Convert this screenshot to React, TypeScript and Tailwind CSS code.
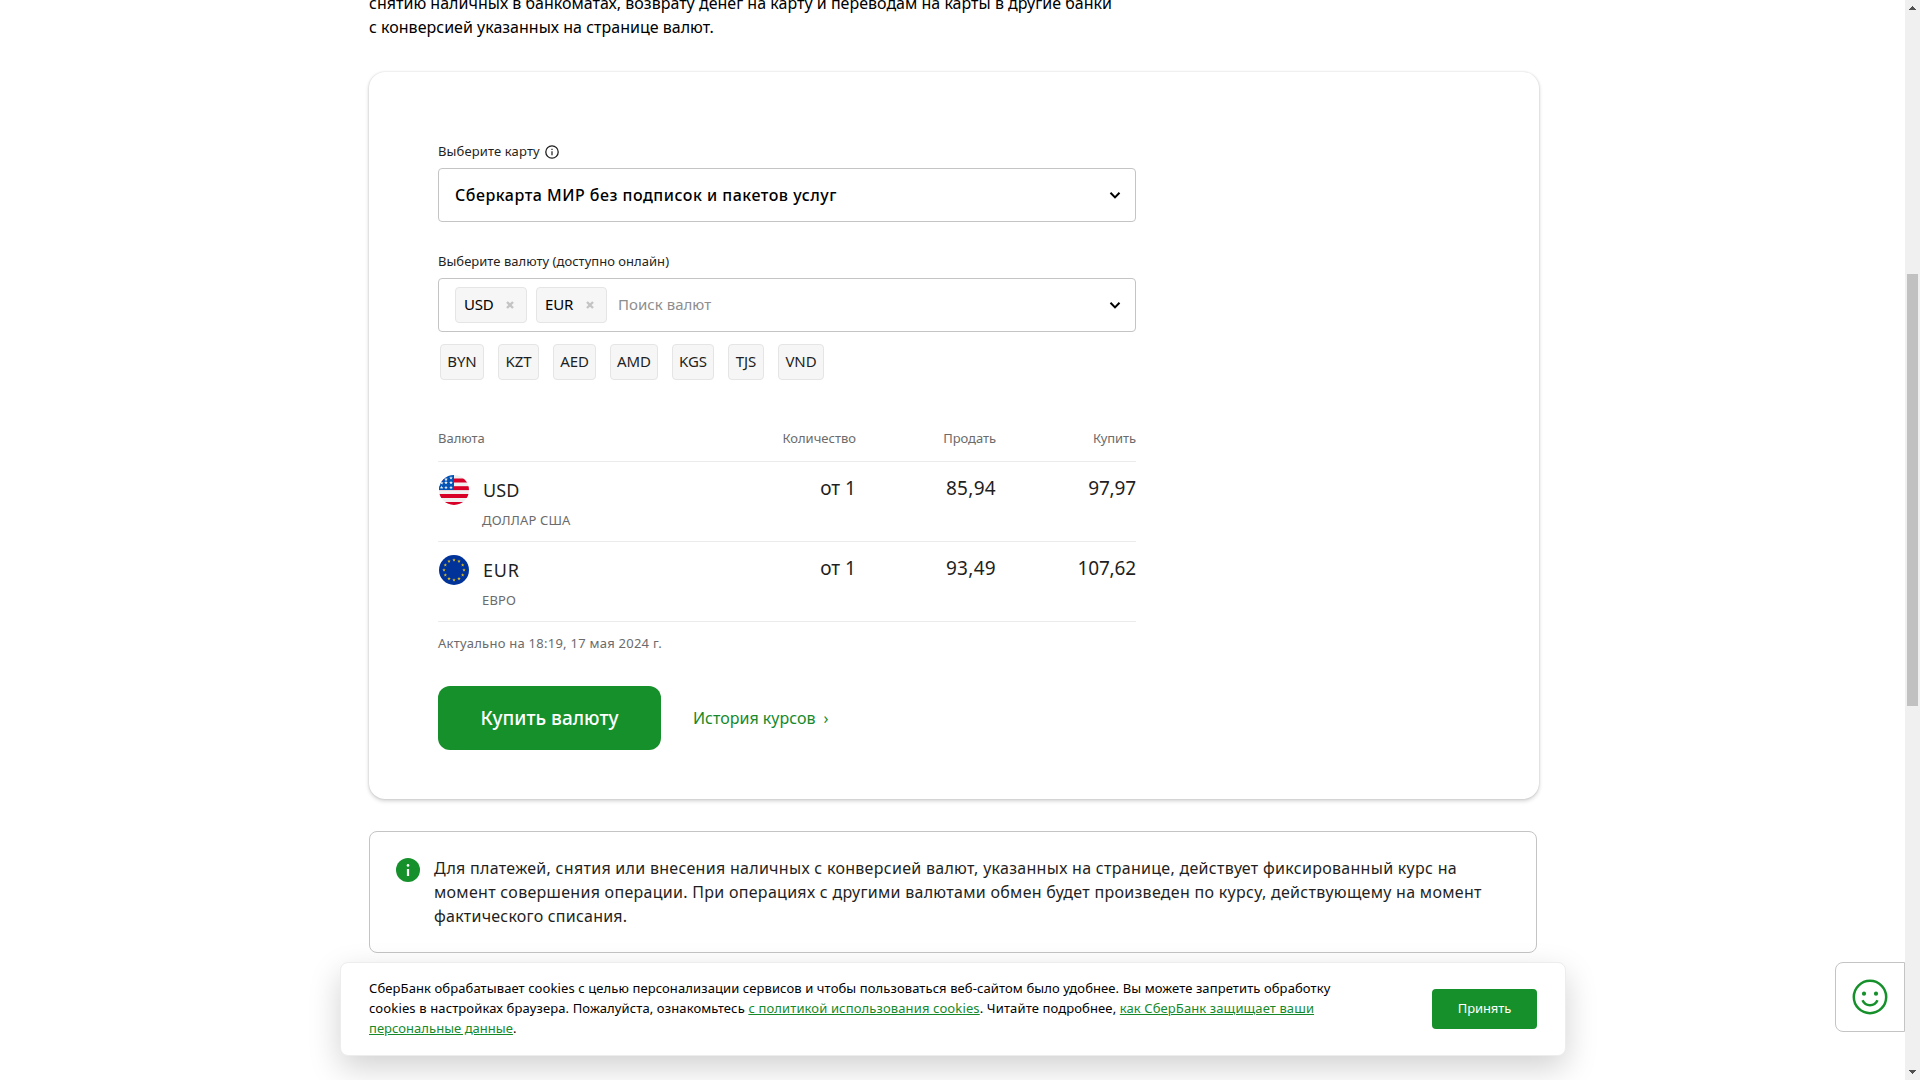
import React from "react";

const Chevron = () => (
  <svg width="12" height="12" viewBox="0 0 12 12" fill="none" stroke="#000" strokeWidth="2" className="shrink-0">
    <path d="M1.5 3.7 6 8.4l4.5-4.7" />
  </svg>
);

const UsFlag = () => (
  <svg width="30" height="30" viewBox="0 0 30 30" className="shrink-0">
    <defs>
      <clipPath id="us">
        <circle cx="15" cy="15" r="15" />
      </clipPath>
    </defs>
    <g clipPath="url(#us)">
      <rect width="30" height="30" fill="#f0f0f0" />
      <g fill="#d80027">
        <rect y="3.5" width="30" height="4" />
        <rect y="11.2" width="30" height="3.9" />
        <rect y="19" width="30" height="4" />
        <rect y="27" width="30" height="3" />
      </g>
      <rect width="15" height="15" fill="#0052b4" />
      <g fill="#f0f0f0">
        {[
          [12, 3], [7, 4.4], [12, 7.7], [7, 7.7], [12, 12.5], [7, 12.5], [2.6, 12.5], [2.8, 8],
        ].map(([x, y]) => (
          <path key={`${x}-${y}`} transform={`translate(${x} ${y})`} d="M0-1.9.5-.6 1.9-.6.7.3 1.2 1.6 0 .8-1.2 1.6-.7.3-1.9-.6-.5-.6Z" />
        ))}
      </g>
    </g>
  </svg>
);

const EuFlag = () => (
  <svg width="30" height="30" viewBox="0 0 30 30" className="shrink-0">
    <circle cx="15" cy="15" r="15" fill="#003399" />
    <g fill="#e0bd1c">
      {[
        [15, 5], [20, 6.3], [23.7, 10], [25, 15], [23.7, 20], [20, 23.7],
        [15, 25], [10, 23.7], [6.3, 20], [5, 15], [6.3, 10], [10, 6.3],
      ].map(([x, y]) => (
        <path key={`${x}-${y}`} transform={`translate(${x} ${y})`} d="M0-1.7.5-.6 1.7-.6.7.2 1.1 1.5 0 .8-1.1 1.5-.7.2-1.7-.6-.5-.6Z" />
      ))}
    </g>
  </svg>
);

const chips = [
  { code: "BYN", cls: "w-[44px] mr-[14px]" },
  { code: "KZT", cls: "w-[41px] mr-[14px]" },
  { code: "AED", cls: "w-[43px] mr-[14px]" },
  { code: "AMD", cls: "w-[48px] mr-[14px]" },
  { code: "KGS", cls: "w-[42px] mr-[14px]" },
  { code: "TJS", cls: "w-[36px] mr-[14px]" },
  { code: "VND", cls: "w-[46px]" },
];

const rates = [
  { code: "USD", codeCls: "tracking-[0.1px]", name: "ДОЛЛАР США", sell: "85,94", buy: "97,97", flag: <UsFlag /> },
  { code: "EUR", codeCls: "tracking-[0.8px]", name: "ЕВРО", sell: "93,49", buy: "107,62", flag: <EuFlag /> },
];

const cols = "grid grid-cols-[1fr_140px_140px_140px]";

function Selected({ code, cls }: { code: string; cls: string }) {
  return (
    <div className={`flex h-[36px] items-center rounded-[4px] border border-[#e5e5e5] bg-[#f6f6f6] pl-[8px] text-[15px] tracking-[-0.2px] text-black ${cls}`}>
      <span className="pb-px">{code}</span>
      <svg width="8" height="8" viewBox="0 0 8 8" stroke="#c4c4c4" strokeWidth="2.4" className="ml-auto mr-[12px]">
        <path d="M1 1l6 6M7 1 1 7" />
      </svg>
    </div>
  );
}

export default function App() {
  return (
    <div className="relative flex h-[1080px] w-[1920px] overflow-hidden bg-white font-['Noto_Sans',sans-serif] text-[#1f1f22]">
      <main className="flex-1 pl-[369px]">
        <p className="-mt-[9px] text-[16px] leading-[24px] tracking-[0.014px] text-black">
          снятию наличных в банкоматах, возврату денег на карту и переводам на карты в другие банки
          <br />
          с конверсией указанных на странице валют.
        </p>

        <section className="mt-[33px] h-[727px] w-[1170px] rounded-[16px] bg-white pl-[69px] pt-[69px] shadow-[0_0_2px_rgba(0,0,0,0.16),0_2px_4px_rgba(0,0,0,0.18)]">
          <div className="w-[698px]">
            <div className="flex h-[22px] items-center text-[13px] tracking-[0.13px]">
              Выберите карту
              <svg width="14" height="14" viewBox="0 0 14 14" fill="none" stroke="#1f1f22" strokeWidth="1.3" className="ml-[5px]">
                <circle cx="7" cy="7" r="6.2" />
                <path d="M7 6.2V10.2M7 3.7V5" strokeWidth="1.2" />
              </svg>
            </div>
            <div className="mt-[5px] flex h-[54px] items-center justify-between rounded-[4px] border border-[#c4c4c4] pl-[16px] pr-[14px] text-[16px] font-medium tracking-[0.5px] text-black">
              Сберкарта МИР без подписок и пакетов услуг
              <Chevron />
            </div>

            <div className="mt-[30px] flex h-[20px] items-center text-[13px] tracking-[0.025px]">Выберите валюту (доступно онлайн)</div>
            <div className="mt-[6px] flex h-[54px] items-center rounded-[4px] border border-[#c4c4c4] pl-[16px] pr-[14px]">
              <Selected code="USD" cls="w-[72px]" />
              <Selected code="EUR" cls="ml-[9px] w-[71px]" />
              <span className="ml-[11px] flex-1 pb-px text-[15px] tracking-[0.03px] text-[#8e8e8e]">Поиск валют</span>
              <Chevron />
            </div>
            <div className="mt-[12px] flex pl-[2px]">
              {chips.map((c) => (
                <div key={c.code} className={`flex h-[36px] items-center justify-center rounded-[4px] border border-[#e5e5e5] bg-[#f6f6f6] pb-[2px] text-[15px] tracking-[-0.1px] ${c.cls}`}>
                  {c.code}
                </div>
              ))}
            </div>

            <div className={`${cols} mt-[42px] h-[40px] border-b border-[#ebebeb] pt-[6px] text-[13px] leading-[20px] text-[#6b6b6b]`}>
              <span>Валюта</span>
              <span className="text-right">Количество</span>
              <span className="text-right tracking-[-0.05px]">Продать</span>
              <span className="text-right tracking-[-0.1px]">Купить</span>
            </div>
            {rates.map((r) => (
              <div key={r.code} className={`${cols} h-[80px] border-b border-[#ebebeb] text-[19px] leading-[24px]`}>
                <div className="pt-[13px]">
                  <div className="flex items-center pl-px">
                    {r.flag}
                    <span className={`ml-[14px] text-[18px] ${r.codeCls}`}>{r.code}</span>
                  </div>
                  <div className="pl-[44px] pt-[5px] text-[13px] leading-[20px] tracking-[0.15px] text-[#6b6b6b]">{r.name}</div>
                </div>
                <span className="pt-[14px] text-right">от 1</span>
                <span className="pt-[14px] text-right tracking-[0.3px]">{r.sell}</span>
                <span className="pt-[14px] text-right tracking-[-0.15px]">{r.buy}</span>
              </div>
            ))}
            <div className="mt-[11px] text-[13px] leading-[20px] tracking-[0.25px] text-[#6b6b6b]">Актуально на 18:19, 17 мая 2024 г.</div>

            <div className="mt-[33px] flex items-center">
              <button className="h-[64px] w-[223px] rounded-[12px] bg-[#16902b] text-[19px] font-medium text-white">Купить валюту</button>
              <a className="ml-[32px] text-[16px] text-[#168a2b]">История курсов</a>
              <span className="ml-[8px] text-[16px] text-[#168a2b]">›</span>
            </div>
          </div>
        </section>

        <section className="mt-[32px] flex h-[122px] w-[1168px] rounded-[8px] border border-[#c4c4c4] pl-[26px] pt-[24px]">
          <svg width="24" height="24" viewBox="0 0 24 24" className="mt-[2px] shrink-0">
            <circle cx="12" cy="12" r="12" fill="#16902b" />
            <rect x="10.9" y="11" width="2.2" height="7" fill="#fff" />
            <circle cx="12" cy="7.4" r="1.3" fill="#fff" />
          </svg>
          <p className="ml-[14px] whitespace-nowrap text-[16px] leading-[24px] tracking-[0.29px]">
            Для платежей, снятия или внесения наличных с конверсией валют, указанных на странице, действует фиксированный курс на
            <br />
            момент совершения операции. При операциях с другими валютами обмен будет произведен по курсу, действующему на момент
            <br />
            <span className="tracking-[0.22px]">фактического списания.</span>
          </p>
        </section>
      </main>

      <div className="flex w-[15px] flex-col items-center bg-[#f0f0f0]">
        <svg width="15" height="15" viewBox="0 0 15 15" fill="#505050" shapeRendering="crispEdges">
          <path d="M7.5 5.5 11.5 10h-8z" />
        </svg>
        <div className="mt-[259px] h-[432px] w-[11px] bg-[#c1c1c1]" />
        <svg width="15" height="15" viewBox="0 0 15 15" fill="#505050" shapeRendering="crispEdges" className="mt-auto">
          <path d="M3.5 5h8l-4 4.5z" />
        </svg>
      </div>

      <div className="absolute left-[340px] top-[962px] flex h-[94px] w-[1226px] items-center rounded-[8px] border border-[#ededed] bg-white pl-[28px] shadow-[0_12px_32px_rgba(0,0,0,0.18)]">
        <p className="flex-1 whitespace-nowrap pb-[2px] text-[13px] leading-[20px] tracking-[0.1px] text-black">
          СберБанк обрабатывает cookies с целью персонализации сервисов и чтобы пользоваться веб-сайтом было удобнее. Вы можете запретить обработку
          <br />
          <span className="tracking-[0.125px]">
            cookies в настройках браузера. Пожалуйста, ознакомьтесь <a className="text-[#168a2b] underline">с политикой использования cookies</a>. Читайте подробнее,{" "}
          </span>
          <a className="text-[#168a2b] underline">
            как СберБанк защищает ваши
            <br />
            <span className="tracking-[0.03px]">персональные данные</span>
          </a>
          .
        </p>
        <button className="mr-[28px] h-[40px] w-[105px] rounded-[4px] bg-[#16902b] text-[13px] tracking-[-0.1px] text-white">Принять</button>
      </div>

      <div className="absolute left-[1835px] top-[962px] flex h-[70px] w-[70px] items-center justify-center rounded-l-[8px] border border-[#c4c4c4] bg-white">
        <svg width="36" height="36" viewBox="0 0 36 36" fill="none" stroke="#16902b" strokeWidth="2.5">
          <circle cx="18" cy="18" r="16.2" />
          <path d="M10.5 21.2c3 6.6 12 6.6 15 0" />
          <circle cx="12" cy="14.7" r="2.1" fill="#16902b" stroke="none" />
          <circle cx="24" cy="14.7" r="2.1" fill="#16902b" stroke="none" />
        </svg>
      </div>
    </div>
  );
}
